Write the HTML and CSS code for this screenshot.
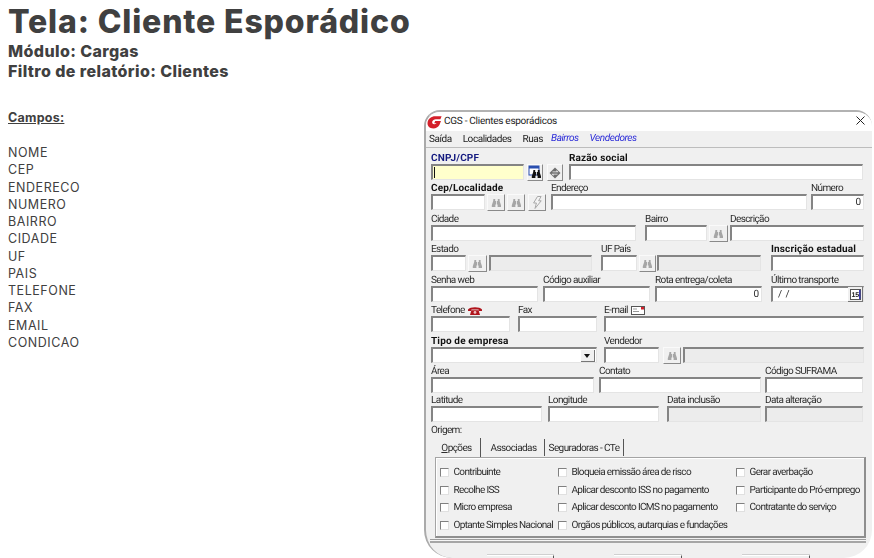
FILE: index.html
```html
<!DOCTYPE html>
<html lang="pt-BR">
<head>
<meta charset="utf-8">
<title>Tela: Cliente Esporádico</title>
<link rel="stylesheet" href="styles.css">
</head>
<body>
<svg class="defs" width="0" height="0" aria-hidden="true">
  <symbol id="bino" viewBox="0 0 11 10">
    <path fill="currentColor" d="M2.4 1h1.8v2h.9v3.6H4.4V9H.8V7.2L2.2 3zM6.8 1h1.8v2l1.4 4.2V9H6.6V6.6H5.9V3h.9z"/>
  </symbol>
</svg>
<main class="page">
  <section class="doc">
    <h1 class="doc-title">Tela: Cliente Esporádico</h1>
    <p class="doc-meta">Módulo: Cargas</p>
    <p class="doc-meta">Filtro de relatório: Clientes</p>
    <h2 class="doc-sub">Campos:</h2>
    <ul class="doc-list">
      <li>NOME</li><li>CEP</li><li>ENDERECO</li><li>NUMERO</li><li>BAIRRO</li><li>CIDADE</li><li>UF</li><li>PAIS</li><li>TELEFONE</li><li>FAX</li><li>EMAIL</li><li>CONDICAO</li>
    </ul>
  </section>

  <section class="window">
    <header class="titlebar">
      <svg class="logo" viewBox="0 0 15 14" width="15" height="14"><path fill="#d4202a" d="M14.6 1.2 13.4 4.2H8.8C7 4.2 5.6 5.3 5.2 6.8 4.9 8.2 5.8 9.2 7.2 9.2 8.2 9.2 9 8.8 9.6 8.2H7.2L8.2 6H14L12.4 10C11 12.2 9 13.4 6.4 13.4 2.4 13.4 0 10.8.6 7.2 1.2 3.6 4.4 1.2 8.2 1.2z"/></svg>
      <span class="title-text">CGS - Clientes esporádicos</span>
      <svg class="close" viewBox="0 0 9 9" width="9" height="9"><path d="M.5.5l8 8M8.5.5l-8 8" stroke="#222" fill="none"/></svg>
    </header>
    <nav class="menubar">
      <span class="menu">Saída</span>
      <span class="menu">Localidades</span>
      <span class="menu m-ruas">Ruas</span>
      <span class="menu alt">Bairros</span>
      <span class="menu alt">Vendedores</span>
    </nav>
    <div class="form">
      <div class="row r1">
        <div class="field w93"><label class="lb bold navy">CNPJ/CPF</label><div class="inp yellow"><i class="caret"></i></div></div>
        <button class="btn w16 g3"><svg class="ic-cal" viewBox="0 0 14 13" width="14" height="13"><rect x="1" y="0" width="10" height="9" fill="#fff" stroke="#2a4fb0"/><rect x="1" y="0" width="10" height="2.5" fill="#2a4fb0"/><use href="#bino" x="3" y="3" width="11" height="10" class="dark"/></svg></button>
        <button class="btn w16 g4"><svg viewBox="0 0 12 12" width="12" height="12"><path fill="#6e6e6e" d="M6 .5 11.5 6 6 11.5.5 6z"/><path fill="#f4f4f4" d="M3.5 4.6h4V3l2 2.2H3.5zM8.5 7.4h-4V9l-2-2.2h6z"/></svg></button>
        <div class="field w294 g6"><label class="lb bold">Razão social</label><div class="inp"></div></div>
      </div>
      <div class="row r2">
        <div class="field w54"><label class="lb bold">Cep/Localidade</label><div class="inp"></div></div>
        <button class="btn w18 g2"><svg class="ic-bino" width="11" height="10"><use href="#bino"/></svg></button>
        <button class="btn w18 g2"><svg class="ic-bino" width="11" height="10"><use href="#bino"/></svg></button>
        <button class="btn w18 g3"><svg viewBox="0 0 10 13" width="10" height="13"><path fill="#f4f4f4" stroke="#a8a8a8" d="M5.5.5h3.6L6.6 4.8h2.6L3 12.5 4.4 7H1.6z"/></svg></button>
        <div class="field w256 g5"><label class="lb">Endereço</label><div class="inp"></div></div>
        <div class="field w53 g4"><label class="lb">Número</label><div class="inp num">0</div></div>
      </div>
      <div class="row r3">
        <div class="field w205"><label class="lb">Cidade</label><div class="inp"></div></div>
        <div class="field w62 g9"><label class="lb">Bairro</label><div class="inp"></div></div>
        <button class="btn w19 g2"><svg class="ic-bino" width="11" height="10"><use href="#bino"/></svg></button>
        <div class="field w134 g2"><label class="lb">Descrição</label><div class="inp"></div></div>
      </div>
      <div class="row r4">
        <div class="field w35"><label class="lb">Estado</label><div class="inp"></div></div>
        <button class="btn w19 g2"><svg class="ic-bino" width="11" height="10"><use href="#bino"/></svg></button>
        <div class="field w103 g2"><div class="inp off"></div></div>
        <div class="field w36 g9"><label class="lb">UF País</label><div class="inp"></div></div>
        <button class="btn w17 g2"><svg class="ic-bino" width="11" height="10"><use href="#bino"/></svg></button>
        <div class="field w104 g1"><div class="inp off"></div></div>
        <div class="field w93 g10"><label class="lb bold">Inscrição estadual</label><div class="inp"></div></div>
      </div>
      <div class="row r5">
        <div class="field w107"><label class="lb">Senha web</label><div class="inp"></div></div>
        <div class="field w107 g5"><label class="lb">Código auxiliar</label><div class="inp"></div></div>
        <div class="field w107 g5"><label class="lb">Rota entrega/coleta</label><div class="inp num">0</div></div>
        <div class="field w93 g9"><label class="lb">Último transporte</label><div class="inp date"><span class="date-val">/ /</span><span class="date-btn"><svg viewBox="0 0 11 11" width="11" height="11"><rect x=".5" y=".5" width="10" height="10" fill="#fff" stroke="#555"/><rect x="9" y="1" width="1.5" height="9" fill="#3b3bb0"/><text x="1.4" y="8.4" class="cal-num">15</text></svg></span></div></div>
      </div>
      <div class="row r6">
        <div class="field w79"><label class="lb">Telefone <svg class="ic-inline" viewBox="0 0 14 9" width="14" height="9"><path fill="#b0141c" d="M0 3.4C2 .4 12 .4 14 3.4V5H10.6V3.4H3.4V5H0z"/><path fill="#b0141c" d="M3.4 4.2h7.2L12 9H2z"/><circle cx="7" cy="6.4" r="1.4" fill="#f0c0c0"/></svg></label><div class="inp"></div></div>
        <div class="field w79 g8"><label class="lb">Fax</label><div class="inp"></div></div>
        <div class="field w260 g7"><label class="lb">E-mail <svg class="ic-inline" viewBox="0 0 14 9" width="14" height="9"><rect x=".5" y=".5" width="13" height="8" fill="#fff" stroke="#555"/><path d="M2 3h4M2 5.5h6" stroke="#999"/><rect x="10" y="1" width="3" height="2.5" fill="#d0202a"/></svg></label><div class="inp"></div></div>
      </div>
      <div class="row r7">
        <div class="field w166"><label class="lb bold">Tipo de empresa</label><div class="inp select"><span class="arrow"></span></div></div>
        <div class="field w55 g7"><label class="lb">Vendedor</label><div class="inp"></div></div>
        <button class="btn w18 g4"><svg class="ic-bino" width="11" height="10"><use href="#bino"/></svg></button>
        <div class="field w181 g2"><div class="inp off"></div></div>
      </div>
      <div class="row r8">
        <div class="field w163"><label class="lb">Área</label><div class="inp"></div></div>
        <div class="field w162 g5"><label class="lb">Contato</label><div class="inp"></div></div>
        <div class="field w98 g4"><label class="lb">Código SUFRAMA</label><div class="inp"></div></div>
      </div>
      <div class="row r9">
        <div class="field w111"><label class="lb">Latitude</label><div class="inp"></div></div>
        <div class="field w111 g6"><label class="lb">Longitude</label><div class="inp"></div></div>
        <div class="field w94 g8"><label class="lb">Data inclusão</label><div class="inp off"></div></div>
        <div class="field w98 g4"><label class="lb">Data alteração</label><div class="inp off"></div></div>
      </div>
      <div class="origem">Origem:</div>
      <div class="tabs">
        <span class="tab tab-a"><u>O</u>pções</span>
        <span class="tab tab-b">Associadas</span>
        <span class="tab tab-c">Seguradoras - CTe</span>
      </div>
      <div class="panel">
        <label class="opt"><i class="cb"></i>Contribuinte</label>
        <label class="opt"><i class="cb"></i>Bloqueia emissão área de risco</label>
        <label class="opt"><i class="cb"></i>Gerar averbação</label>
        <label class="opt"><i class="cb"></i>Recolhe ISS</label>
        <label class="opt"><i class="cb"></i>Aplicar desconto ISS no pagamento</label>
        <label class="opt"><i class="cb"></i>Participante do Pró-emprego</label>
        <label class="opt"><i class="cb"></i>Micro empresa</label>
        <label class="opt"><i class="cb"></i>Aplicar desconto ICMS no pagamento</label>
        <label class="opt"><i class="cb"></i>Contratante do serviço</label>
        <label class="opt"><i class="cb"></i>Optante Simples Nacional</label>
        <label class="opt"><i class="cb"></i>Orgãos públicos, autarquias e fundações</label>
      </div>
    </div>
    <div class="rule"></div>
    <footer class="actions">
      <span class="act act-1"></span>
      <span class="act act-2"></span>
      <span class="act act-3"></span>
    </footer>
  </section>
</main>
</body>
</html>
```
FILE: styles.css
```css
* { box-sizing: border-box; }
html, body { margin: 0; height: 558px; overflow: hidden; background: #fff; }
.defs { position: absolute; }
.page { display: flex; align-items: flex-start; height: 558px; }

.doc { width: 424px; padding: 4px 0 0 8px; color: #404040; font-family: Inter, "Open Sans", sans-serif; }
.doc-title { margin: 0; font-size: 32px; line-height: 36px; font-weight: 800; letter-spacing: .85px; }
.doc-meta { margin: 0; font-size: 16px; line-height: 20px; font-weight: 800; letter-spacing: .4px; }
.doc-title + .doc-meta { margin-top: 1px; }
.doc-sub { margin: 28px 0 0; font-size: 12.5px; line-height: 17px; font-weight: 700; letter-spacing: .25px; text-decoration: underline; }
.doc-list { list-style: none; margin: 18px 0 0; padding: 0; font-size: 12.5px; line-height: 17.27px; letter-spacing: .55px; }

.window { width: 448px; height: 448px; margin-top: 110px; display: flex; flex-direction: column; flex: none;
  background: #f0f0f0; border-top: 2px solid #b2b2b2; border-left: 2px solid #aaa;
  border-radius: 16px 16px 28px 28px; overflow: hidden; filter: blur(.3px);
  font-family: Roboto, "Liberation Sans", sans-serif; font-size: 10px; color: #2c2c2c;
  text-rendering: geometricPrecision; letter-spacing: -.6px; }
.titlebar { height: 19px; flex: none; background: #fff; display: flex; align-items: center; padding: 0 7px 0 1px; }
.logo { flex: none; }
.title-text { margin-left: 2px; color: #222; flex: 1; letter-spacing: -.27px; }
.close { flex: none; margin: -2px 0 0; }
.menubar { height: 17px; flex: none; display: flex; align-items: center; border-bottom: 1px solid #bdbdbd; padding-left: 3px; color: #222; letter-spacing: -.45px; }
.menu { margin-right: 11px; }
.m-ruas { margin-right: 8px; }
.alt { color: #2b2bd8; font-style: italic; margin-top: -2px; }

.form { flex: none; padding: 3px 0 0 5px; }
.row { display: flex; align-items: flex-end; }
.r2 { margin-top: 1px; } .r3 { margin-top: 2px; } .r4 { margin-top: 1px; } .r5 { margin-top: 2px; }
.r6 { margin-top: 1px; } .r7 { margin-top: 2px; } .r8 { margin-top: 1px; }

.field { display: flex; flex-direction: column; flex: none; }
.lb { display: flex; align-items: center; height: 13px; padding-top: 1.5px; white-space: nowrap; }
.bold { font-weight: 700; color: #111; letter-spacing: .15px; }
.navy { color: #141a80; }
.ic-inline { margin-left: 3px; }

.inp { height: 16px; background: #fff; border-style: solid; border-width: 2px 1px 1px 2px;
  border-color: #848484 #e4e4e4 #e4e4e4 #848484; display: flex; align-items: center; position: relative; letter-spacing: 0; }
.yellow { background: #ffffcc; }
.caret { display: block; width: 1px; height: 11px; margin-left: 1px; background: #111; }
.off { background: #ececec; }
.num { justify-content: flex-end; padding-right: 2px; }
.date { justify-content: space-between; padding-left: 5px; }
.date-val { letter-spacing: .5px; }
.date-btn { width: 15px; height: 15px; margin: -1px 0; background: #f0f0f0; border-right: 1px solid #777; border-bottom: 1px solid #777; display: flex; align-items: center; justify-content: center; }
.cal-num { font-size: 7px; font-family: "Liberation Sans", sans-serif; fill: #222; font-weight: 700; letter-spacing: 0; }
.select { justify-content: flex-end; padding-right: 1px; }
.arrow { width: 14px; height: 12px; background: #f0f0f0; border-right: 1px solid #777; border-bottom: 1px solid #777; position: relative; }
.arrow::after { content: ""; position: absolute; left: 3px; top: 4px; border: 3.5px solid transparent; border-top: 4px solid #111; border-bottom: 0; }

.btn { height: 17px; flex: none; padding: 0; margin-bottom: -1px; background: #f0f0f0; border: 1px solid; border-color: #fafafa #8a8a8a #8a8a8a #fafafa;
  display: flex; align-items: center; justify-content: center; color: #a6a6a6; }
.ic-cal { overflow: visible; color: #111; }
.dark { color: #111; }

.w16 { width: 16px; } .w17 { width: 17px; } .w18 { width: 18px; } .w19 { width: 19px; } .w35 { width: 35px; } .w36 { width: 36px; }
.w53 { width: 53px; } .w54 { width: 54px; } .w55 { width: 55px; } .w62 { width: 62px; } .w79 { width: 79px; }
.w93 { width: 93px; } .w94 { width: 94px; } .w98 { width: 98px; } .w103 { width: 103px; } .w104 { width: 104px; }
.w107 { width: 107px; } .w111 { width: 111px; } .w134 { width: 134px; } .w162 { width: 162px; } .w163 { width: 163px; }
.w166 { width: 166px; } .w181 { width: 181px; } .w205 { width: 205px; } .w256 { width: 256px; } .w260 { width: 260px; } .w294 { width: 294px; }
.g1 { margin-left: 1px; } .g2 { margin-left: 2px; } .g3 { margin-left: 3px; } .g4 { margin-left: 4px; } .g5 { margin-left: 5px; }
.g6 { margin-left: 6px; } .g7 { margin-left: 7px; } .g8 { margin-left: 8px; } .g9 { margin-left: 9px; } .g10 { margin-left: 10px; }

.origem { height: 13px; margin-top: 1px; padding-top: 1.5px; display: flex; align-items: center; }
.tabs { display: flex; height: 20px; margin-top: 2px; padding-left: 2px; align-items: stretch; }
.tab { display: flex; align-items: center; justify-content: center; border-right: 1px solid #555; height: 17px; padding-top: 1.5px; white-space: nowrap; }
.tab-a { width: 48px; height: 19px; background: #f0f0f0; }
.tab-b { width: 62px; margin-left: 2px; margin-top: 1px; }
.tab-c { width: 79px; margin-top: 1px; }

.panel { width: 431px; height: 81px; margin: -1px 0 0 4px; padding: 5.5px 0 0 4px; display: grid;
  grid-template-columns: 118px 178px 1fr; grid-auto-rows: 17.7px; background: #f0f0f0;
  border: 1px solid #a4a4a4; border-right: 2px solid #8e8e8e; border-bottom: 2px solid #8e8e8e; box-shadow: inset 1px 1px 0 #fff; }
.opt { display: flex; align-items: center; white-space: nowrap; letter-spacing: -.65px; }
.cb { width: 9px; height: 9px; flex: none; margin-right: 4.5px; background: #fff; border: 1px solid; border-color: #808080 #e0e0e0 #e0e0e0 #808080; }

.rule { height: 4px; flex: none; margin: 1px 6px 0 4px; border-top: 1px solid #9c9c9c; border-bottom: 2px solid #a6a6a6; background: #f6f6f6; }
.actions { flex: 1; position: relative; display: flex; padding: 12px 0 0 61px; }
.act { display: block; height: 8px; background: #f0f0f0; border-top: 1px solid #fff; border-right: 1px solid #555; box-shadow: 0 -1px 0 #d0d0d0; }
.act-1 { width: 67px; } .act-2 { width: 68px; margin-left: 60px; } .act-3 { width: 68px; margin-left: 60px; }
```
